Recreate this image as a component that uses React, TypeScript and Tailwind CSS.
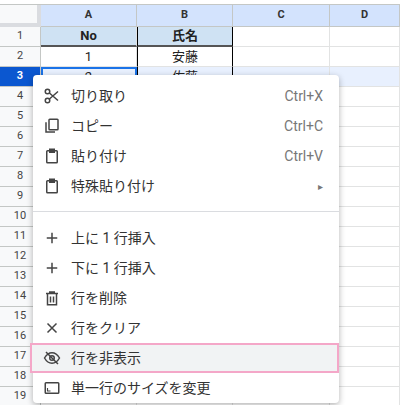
import React from "react";

const F = { fontFamily: 'Roboto, Arial, "Noto Sans CJK JP", sans-serif' };

const Icon = ({ children }: { children: React.ReactNode }) => (
  <svg width="18" height="18" viewBox="0 0 24 24" fill="none" stroke="#444" strokeWidth="2">{children}</svg>
);

const items: { icon: React.ReactNode; label: string; sc?: string; sep?: boolean; hl?: boolean }[] = [
  { icon: <Icon><circle cx="6" cy="6" r="3"/><circle cx="6" cy="18" r="3"/><path d="M8.5 8 20 18M8.5 16 20 6"/></Icon>, label: "切り取り", sc: "Ctrl+X" },
  { icon: <Icon><rect x="8" y="3" width="12" height="14" rx="1"/><path d="M4 7v13h12"/></Icon>, label: "コピー", sc: "Ctrl+C" },
  { icon: <Icon><rect x="5" y="5" width="14" height="16" rx="1"/><rect x="9" y="3" width="6" height="4" fill="#444"/></Icon>, label: "貼り付け", sc: "Ctrl+V" },
  { icon: <Icon><rect x="5" y="5" width="14" height="16" rx="1"/><rect x="9" y="3" width="6" height="4" fill="#444"/></Icon>, label: "特殊貼り付け", sc: "▸", sep: true },
  { icon: <Icon><path d="M12 5v14M5 12h14"/></Icon>, label: "上に 1 行挿入" },
  { icon: <Icon><path d="M12 5v14M5 12h14"/></Icon>, label: "下に 1 行挿入" },
  { icon: <Icon><path d="M4 6h16M9 6V4h6v2M6 6v15h12V6M10 10v8M14 10v8"/></Icon>, label: "行を削除" },
  { icon: <Icon><path d="M6 6l12 12M18 6 6 18"/></Icon>, label: "行をクリア" },
  { icon: <Icon><path d="M2 12s4-7 10-7 10 7 10 7-4 7-10 7S2 12 2 12z"/><circle cx="12" cy="12" r="3"/><path d="M4 4l16 16"/></Icon>, label: "行を非表示", hl: true },
  { icon: <Icon><rect x="3" y="5" width="18" height="14" rx="1"/><path d="M6 12v4h4" strokeWidth="1.5"/></Icon>, label: "単一行のサイズを変更" },
];

const cols = ["A", "B", "C", "D"];

export default function App() {
  return (
    <div className="relative w-[400px] h-[405px] overflow-hidden bg-white text-[13px] text-[#222]" style={F}>
      <div className="h-[5px] bg-white border-b border-[#c4c7c5]" />
      <div className="grid grid-cols-[41px_96px_96px_97px_70px]">
        <div className="h-[22px] bg-[#f8f9fa] border-r-4 border-b-4 border-[#dadce0]" />
        {cols.map((c) => (
          <div key={c} className="h-[22px] bg-[#d3e3fd] border-r border-b border-[#c4c7c5] flex items-center justify-center text-[11px] font-bold text-[#333]">{c}</div>
        ))}
        {Array.from({ length: 19 }, (_, i) => i + 1).map((r) => {
          const sel = r === 3;
          return (
            <React.Fragment key={r}>
              <div className={`h-[20px] flex items-center justify-center text-[11px] border-r border-b border-[#c4c7c5] ${sel ? "bg-[#0b57d0] text-white font-bold" : "bg-[#f8f9fa] text-[#444]"}`}>{r}</div>
              {cols.map((c, ci) => {
                let txt = "";
                let cls = sel ? "bg-[#e8f0fe]" : "bg-white";
                if (r === 1 && ci < 2) { cls = "bg-[#cfe2f3] font-bold"; txt = ci === 0 ? "No" : "氏名"; }
                if (r === 2 && ci === 0) txt = "1";
                if (r === 2 && ci === 1) txt = "安藤";
                if (r === 3 && ci === 0) txt = "2";
                if (r === 3 && ci === 1) txt = "佐藤";
                const bl = ci === 1 && r <= 3 ? "border-l border-l-black" : "";
                const br = ci === 1 && r <= 3 ? "border-r-black" : "border-r-[#e2e3e3]";
                const bb = r === 1 && ci < 2 ? "border-b-2 border-b-[#555]" : "border-b border-b-[#e2e3e3]";
                const selA = sel && ci === 0 ? "outline outline-2 outline-[#1a73e8] -outline-offset-2" : "";
                return (
                  <div key={c} className={`h-[20px] border-r ${br} ${bb} ${bl} ${cls} ${selA} flex items-center justify-center text-[13px]`}>{txt}</div>
                );
              })}
            </React.Fragment>
          );
        })}
      </div>
      <div className="absolute left-[33px] top-[75px] w-[306px] bg-white rounded shadow-[0_2px_6px_rgba(0,0,0,0.3)] pt-[6px]">
        {items.map((it, i) => (
          <React.Fragment key={i}>
            <div className={`h-[30px] flex items-center pr-[16px] ${it.hl ? "bg-[#f1f3f4] border-2 border-[#f4a7c8] -ml-[3px] pl-[11px] h-[29px]" : "pl-[10px]"}`}>
              <span className="w-[28px] flex items-center">{it.icon}</span>
              <span className="flex-1 text-[14px] text-[#333]">{it.label}</span>
              {it.sc && <span className={`text-[#777] ${it.sc === "▸" ? "text-[10px]" : "text-[14px]"}`}>{it.sc}</span>}
            </div>
            {it.sep && <div className="mt-[10px] mb-[11px] h-px bg-[#dadce0]" />}
          </React.Fragment>
        ))}
      </div>
    </div>
  );
}
